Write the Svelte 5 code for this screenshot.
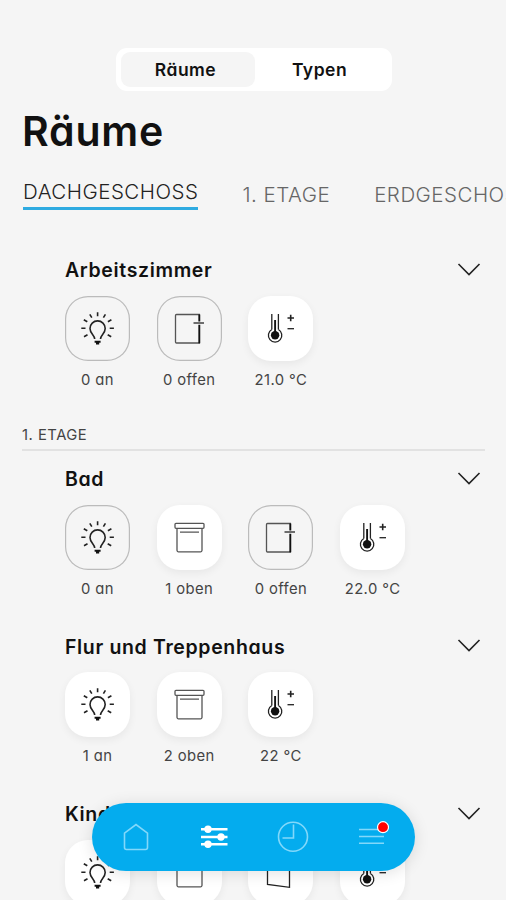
<!--
  Room overview: segmented switch, floor tabs, rooms with their device tiles
  and the floating navigation bar.
-->

<script lang="ts">
  type Icon = "light" | "window" | "tilted" | "blind" | "temp";

  interface Device {
    icon: Icon;
    label?: string;
    active?: boolean;
  }

  interface Room {
    name: string;
    section?: string;
    devices: Device[];
  }

  const views = ["Räume", "Typen"];
  const floors = ["DACHGESCHOSS", "1. ETAGE", "ERDGESCHOSS"];

  const rooms: Room[] = [
    {
      name: "Arbeitszimmer",
      devices: [
        { icon: "light", label: "0 an" },
        { icon: "window", label: "0 offen" },
        { icon: "temp", label: "21.0 °C", active: true },
      ],
    },
    {
      name: "Bad",
      section: "1. ETAGE",
      devices: [
        { icon: "light", label: "0 an" },
        { icon: "blind", label: "1 oben", active: true },
        { icon: "window", label: "0 offen" },
        { icon: "temp", label: "22.0 °C", active: true },
      ],
    },
    {
      name: "Flur und Treppenhaus",
      devices: [
        { icon: "light", label: "1 an", active: true },
        { icon: "blind", label: "2 oben", active: true },
        { icon: "temp", label: "22 °C", active: true },
      ],
    },
    {
      name: "Kinderzimmer",
      devices: [
        { icon: "light", active: true },
        { icon: "blind", active: true },
        { icon: "tilted", active: true },
        { icon: "temp", active: true },
      ],
    },
  ];

  let view = $state(0);
  let floor = $state(0);
</script>

{#snippet deviceIcon(icon: Icon)}
  <svg class="device-icon" viewBox="0 0 65 65">
    {#if icon === "light"}
      <path class="bold" d="M29.7 43c0-4-4.700-5.400-4.700-10.500a7.600 7.600 0 0 1 15.200 0c0 5.100-4.700 6.500-4.700 10.500" />
      <path class="thick" d="M29.600 45.800h6M31 47.500h3.200" />
      <path class="bold" d="M32.600 16.200v4M24.800 18.300l2 3.300M40.400 18.300l-2 3.300M18.800 23.800l3.500 2M46.400 23.800l-3.500 2M16.300 32.200h4.200M44.700 32.200h4.200M19 40.700l3.500-2M46.200 40.700l-3.500-2" />
    {:else if icon === "window"}
      <path class="soft" d="M43 18.500H19.500a1 1 0 0 0-1 1v26.500a1 1 0 0 0 1 1H43" />
      <path class="thick" d="M42.300 18.500v7M42.300 28.800v18.500" />
      <path d="M36.500 27h10.500" />
    {:else if icon === "tilted"}
      <path d="M19.500 18.500v26l22 2.800V18.500z" />
    {:else if icon === "blind"}
      <rect class="soft" x="18" y="18.300" width="29" height="5" rx="1" />
      <path class="soft" d="M20 23.300v22a1.500 1.500 0 0 0 1.500 1.500h22a1.500 1.500 0 0 0 1.500-1.500v-22M23 27.200h19" />
    {:else}
      <path d="M23.800 18v15.500M30.400 18v15.500" />
      <path d="M23.800 33.500a6.700 6.700 0 1 0 6.600 0" />
      <path class="thick" d="M27.100 24v15" />
      <circle class="fill" cx="27.100" cy="39.300" r="4.200" />
      <path class="bold" d="M39.500 22h6.500M42.700 18.800v6.400" />
      <path d="M39.500 32.700h6.500" />
    {/if}
  </svg>
{/snippet}

<div class="screen">
  <div class="switch">
    {#each views as label, i}
      <button class:selected={view === i} onclick={() => (view = i)}>{label}</button>
    {/each}
  </div>

  <h1>Räume</h1>

  <div class="tabs">
    {#each floors as label, i}
      <button class="tab" class:current={floor === i} onclick={() => (floor = i)}>{label}</button>
    {/each}
  </div>

  <main>
    {#each rooms as room}
      {#if room.section}
        <div class="section">{room.section}</div>
      {/if}
      <section class="room">
        <header>
          <h2>{room.name}</h2>
          <svg class="chevron" viewBox="0 0 24 14">
            <path d="M1.500 1l10.500 10.500L22.500 1" />
          </svg>
        </header>
        <div class="devices">
          {#each room.devices as device}
            <div class="device">
              <div class="tile" class:active={device.active}>
                {@render deviceIcon(device.icon)}
              </div>
              {#if device.label}
                <span>{device.label}</span>
              {/if}
            </div>
          {/each}
        </div>
      </section>
    {/each}
  </main>

  <nav>
    <svg class="nav-icon" viewBox="0 0 36 36">
      <path d="M6.500 14.200L18 5.500l11.500 8.700v14.300a2 2 0 0 1-2 2h-19a2 2 0 0 1-2-2z" />
    </svg>
    <svg class="nav-icon on" viewBox="0 0 36 36">
      <path d="M5 10.300h26.500M5 18h26.500M5 25.300h26.500" />
      <circle cx="12" cy="10.300" r="3.700" />
      <circle cx="25" cy="18" r="3.700" />
      <circle cx="12" cy="25.300" r="3.700" />
    </svg>
    <svg class="nav-icon" viewBox="0 0 36 36">
      <circle cx="18" cy="17.700" r="14.500" />
      <path d="M18.500 5.500v13.500H7.500" />
    </svg>
    <svg class="nav-icon" viewBox="0 0 36 36">
      <path d="M6 10.500h25M6 17.500h25M6 24.300h25" />
      <circle class="dot" cx="30" cy="8.200" r="5.500" />
    </svg>
  </nav>
</div>

<style>
  :global(body) {
    background: #f5f5f5;
  }

  .screen {
    position: relative;
    box-sizing: border-box;
    width: 506px;
    height: 900px;
    padding-top: 48px;
    overflow: hidden;
    background: #f5f5f5;
    color: #111;
    font-family: Inter, "Liberation Sans", sans-serif;
    font-feature-settings: "cv11";
  }

  button {
    padding: 0;
    border: 0;
    background: none;
    color: inherit;
    font: inherit;
    font-feature-settings: inherit;
  }

  .switch {
    display: flex;
    box-sizing: border-box;
    width: 276px;
    height: 43px;
    margin-left: 116px;
    padding: 4px 8px 4px 5px;
    border-radius: 11px;
    background: #fff;
  }

  .switch button {
    flex: 1;
    border-radius: 9px;
    font-size: 17.500px;
    font-weight: 600;
    letter-spacing: 0.500px;
  }

  .switch .selected {
    padding-right: 5px;
    background: #f5f5f5;
  }

  h1 {
    margin: 15px 0 0 22px;
    font-size: 41px;
    font-weight: 600;
    line-height: 50px;
    letter-spacing: 0.800px;
  }

  .tabs {
    display: flex;
    gap: 44px;
    height: 102px;
    padding: 23px 0 0 23px;
    box-sizing: border-box;
    align-items: flex-start;
    white-space: nowrap;
  }

  .tab {
    flex: none;
    margin-top: 3px;
    color: #666;
    font-size: 20.500px;
    font-weight: 300;
    line-height: 26px;
    letter-spacing: 0.500px;
  }

  .tab.current {
    margin-top: 0;
    padding-bottom: 2px;
    border-bottom: 3px solid #2fabe1;
    color: #222;
  }

  .room {
    height: 167.500px;
    padding: 0 25px 0 65px;
    box-sizing: border-box;
  }

  .room header {
    display: flex;
    align-items: center;
    justify-content: space-between;
    height: 24px;
  }

  h2 {
    margin: 0;
    font-size: 19.500px;
    font-weight: 600;
    letter-spacing: 0.650px;
  }

  .chevron {
    width: 24px;
    height: 14px;
    margin-bottom: 1px;
    fill: none;
    stroke: #222;
    stroke-width: 1.600;
  }

  .devices {
    display: flex;
    gap: 26.700px;
    padding-top: 13.500px;
  }

  .device {
    display: flex;
    flex-direction: column;
    align-items: center;
    width: 65px;
    color: #444;
    font-size: 14.800px;
    line-height: 20px;
    letter-spacing: 0.400px;
    white-space: nowrap;
  }

  .device span {
    margin-top: 9px;
  }

  .tile {
    box-sizing: border-box;
    width: 65px;
    height: 65px;
    border-radius: 23px;
    box-shadow: inset 0 0 0 1.200px #bbb;
  }

  .tile.active {
    background: #fff;
    box-shadow: 0 3px 8px rgba(0, 0, 0, 0.06);
  }

  .device-icon {
    display: block;
    width: 65px;
    height: 65px;
    fill: none;
    stroke: #222;
    stroke-width: 1.300;
  }

  .device-icon .bold {
    stroke-width: 1.600;
  }

  .device-icon .thick {
    stroke: #111;
    stroke-width: 1.900;
  }

  .device-icon .soft {
    stroke: #555;
  }

  .device-icon .fill {
    fill: #111;
    stroke: none;
  }

  .section {
    box-sizing: border-box;
    height: 25px;
    margin: 0 21px 16.500px 22px;
    border-bottom: 2px solid #e2e2e2;
    color: #444;
    font-size: 14.800px;
    line-height: 19px;
    letter-spacing: 0.500px;
  }

  nav {
    position: absolute;
    top: 803px;
    left: 92px;
    display: flex;
    align-items: center;
    justify-content: space-between;
    box-sizing: border-box;
    width: 323px;
    height: 68px;
    padding: 0 26px;
    border-radius: 34px;
    background: #04acee;
    box-shadow: 0 2px 16px rgba(0, 0, 0, 0.12);
  }

  .nav-icon {
    width: 36px;
    height: 36px;
    fill: none;
    stroke: #82d8fa;
    stroke-width: 1.600;
  }

  .nav-icon.on {
    stroke: #fff;
    stroke-width: 2.600;
  }

  .nav-icon.on circle {
    fill: #fff;
    stroke: none;
  }

  .nav-icon .dot {
    fill: #f00;
    stroke: #fff;
    stroke-width: 1.200;
  }
</style>
